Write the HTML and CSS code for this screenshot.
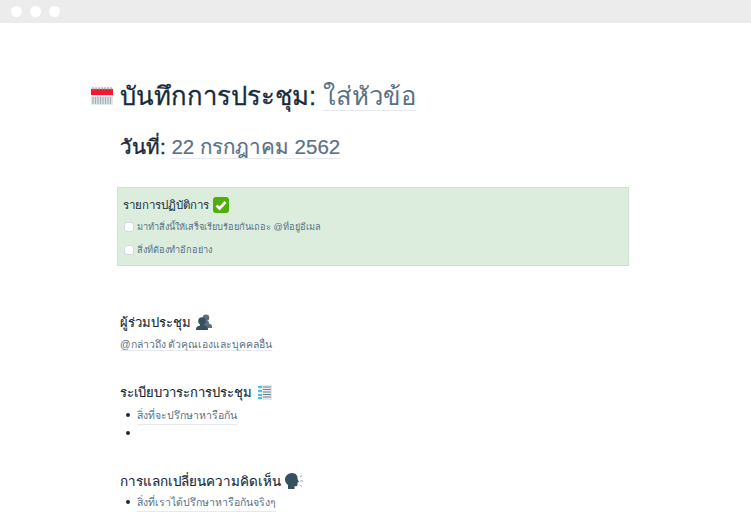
FILE: index.html
```html
<!DOCTYPE html>
<html lang="th">
<head>
    <meta charset="UTF-8">
    <meta name="viewport" content="width=device-width, initial-scale=1.0">
    <title>บันทึกการประชุม</title>
    <link rel="stylesheet" href="styles.css">
</head>
<body>
    <div class="titlebar">
        <span class="dot"></span>
        <span class="dot"></span>
        <span class="dot"></span>
    </div>
    <div class="page">
        <h1 class="title">
            <svg class="cal-icon" viewBox="0 0 22 18" width="22" height="18">
                <rect x="0" y="1" width="22" height="17" fill="#e3e8ec"/>
                <rect x="0" y="2" width="22" height="6" fill="#f0192f"/>
                <path d="M2 0v3M5 0v3M8 0v3M11 0v3M14 0v3M17 0v3M20 0v3" stroke="#8a949b" stroke-width="1"/>
                <path d="M2 10v7M4.500 10v7M7 10v7M9.500 10v7M12 10v7M14.500 10v7M17 10v7M19.500 10v7" stroke="#a3afb7" stroke-width="1.200"/>
            </svg>
            <span class="title-text">บันทึกการประชุม: <span class="fill">ใส่หัวข้อ</span></span>
        </h1>
        <h2 class="date">วันที่: <span class="fill">22 กรกฎาคม 2562</span></h2>

        <div class="callout">
            <div class="callout-head">
                <span>รายการปฏิบัติการ</span>
                <svg class="check-icon" viewBox="0 0 16 16" width="16" height="16">
                    <rect width="16" height="16" rx="3" fill="#4fae0c"/>
                    <path d="M3.500 8.500l3 3 6-6.500" fill="none" stroke="#fff" stroke-width="2.600"/>
                </svg>
            </div>
            <div class="task"><span class="box"></span><span>มาทำสิ่งนี้ให้เสร็จเรียบร้อยกันเถอะ @ที่อยู่อีเมล</span></div>
            <div class="task"><span class="box"></span><span>สิ่งที่ต้องทำอีกอย่าง</span></div>
        </div>

        <section class="people">
            <h3><span>ผู้ร่วมประชุม</span>
                <svg class="icon" viewBox="0 0 16 16" width="16" height="16">
                    <circle cx="10" cy="3.800" r="3.300" fill="#5c6f7a"/>
                    <path d="M8 7h4.500l.5 2.500c1.500.5 3 1 3 3V14H8z" fill="#5c6f7a"/>
                    <circle cx="6" cy="7" r="3.800" fill="#35505e"/>
                    <path d="M4 10h4v1.500c2 .5 4 1.300 4 3.500v1H0v-1c0-2.200 2-3 4-3.500z" fill="#35505e"/>
                </svg>
            </h3>
            <p class="hint"><span class="fill">@กล่าวถึง ตัวคุณเองและบุคคลอื่น</span></p>
        </section>

        <section class="agenda">
            <h3><span>ระเบียบวาระการประชุม</span>
                <svg class="icon" viewBox="0 0 16 16" width="16" height="16">
                    <rect x="2" y="1" width="13" height="15" fill="#e4eaee"/>
                    <path d="M6 3h8M6 5.500h8M6 8h8M6 10.500h8M6 13h8" stroke="#75858f" stroke-width="1.200"/>
                    <path d="M1 3h4M1 7h4M1 11h4M1 14h4" stroke="#19b5d8" stroke-width="1.600"/>
                </svg>
            </h3>
            <ul>
                <li><span class="fill">สิ่งที่จะปรึกษาหารือกัน</span></li>
                <li></li>
            </ul>
        </section>

        <section class="talk">
            <h3><span>การแลกเปลี่ยนความคิดเห็น</span>
                <svg class="icon" viewBox="0 0 18 16" width="18" height="16">
                    <path d="M7 0c4 0 6 3 5.500 6l1.500 3-1.500.5V12c0 1-1 1.500-3 1.300V16H3v-4C1 10.500 0 8.500 0 6.500 0 3 3 0 7 0z" fill="#35505e"/>
                    <path d="M15 4l2-1.500M15 8h3M15 12l2 1.500" stroke="#9aa7af" stroke-width="1"/>
                </svg>
            </h3>
            <ul>
                <li><span class="fill">สิ่งที่เราได้ปรึกษาหารือกันจริงๆ</span></li>
            </ul>
        </section>
    </div>
</body>
</html>
```

FILE: styles.css
```css
body {
    margin: 0;
    height: 526px;
    overflow: hidden;
    background: #ffffff;
    color: #172b3a;
    font-family: "Liberation Sans", "Noto Sans", sans-serif;
}
.titlebar {
    height: 23px;
    background: #ececec;
    display: flex;
    align-items: center;
    gap: 8px;
    padding-left: 11px;
}
.dot {
    width: 11px;
    height: 11px;
    border-radius: 50%;
    background: #fff;
}
.page {
    padding: 0 122px 0 117px;
}
.fill {
    color: #5a7187;
    font-weight: normal;
    border-bottom: 1px solid #e6e9f2;
    -webkit-text-stroke: 0;
}
.title {
    margin: 49px 0 0 -26px;
    display: flex;
    align-items: center;
    gap: 7px;
    height: 48px;
    font-size: 25.650px;
    font-weight: normal;
    -webkit-text-stroke: 0.3px #172b3a;
}
.cal-icon {
    flex: none;
}
.date {
    margin: 12px 0 0 3px;
    height: 30px;
    font-size: 20.500px;
    line-height: 30px;
    font-weight: normal;
    -webkit-text-stroke: 0.4px #172b3a;
}
.date .fill {
    -webkit-text-stroke: 0.2px #5a7187;
}
.callout {
    margin-top: 25px;
    height: 79px;
    box-sizing: border-box;
    padding: 6px 5px;
    background: #dcedde;
    border: 1px solid #cde3d0;
}
.callout-head {
    display: flex;
    align-items: center;
    gap: 4px;
    font-size: 11.500px;
    height: 21px;
}
.task {
    display: flex;
    align-items: center;
    gap: 3px;
    height: 23px;
    font-size: 9.200px;
    color: #5a7187;
}
.box {
    width: 8px;
    height: 8px;
    margin-left: 1px;
    background: #fff;
    border: 1px solid #d5d8dc;
    border-radius: 3px;
}
h3 {
    margin: 0;
    display: flex;
    align-items: center;
    gap: 5px;
    font-size: 13px;
    font-weight: normal;
    height: 22px;
    -webkit-text-stroke: 0.15px #172b3a;
}
section {
    margin-left: 3px;
}
.people {
    margin-top: 45px;
}
.hint {
    margin: 3px 0 0;
    font-size: 10.400px;
}
.agenda {
    margin-top: 28px;
}
.talk {
    margin-top: 28px;
}
.talk h3 {
    font-size: 13.400px;
    gap: 4px;
}
ul {
    margin: 3px 0 0;
    padding-left: 6px;
    list-style: none;
    font-size: 10.500px;
}
.talk ul {
    margin-top: 1px;
}
li {
    display: flex;
    align-items: center;
    gap: 7px;
    height: 18px;
    line-height: 18px;
}
li::before {
    content: "";
    width: 4px;
    height: 4px;
    border-radius: 50%;
    background: #172b3a;
}
```
